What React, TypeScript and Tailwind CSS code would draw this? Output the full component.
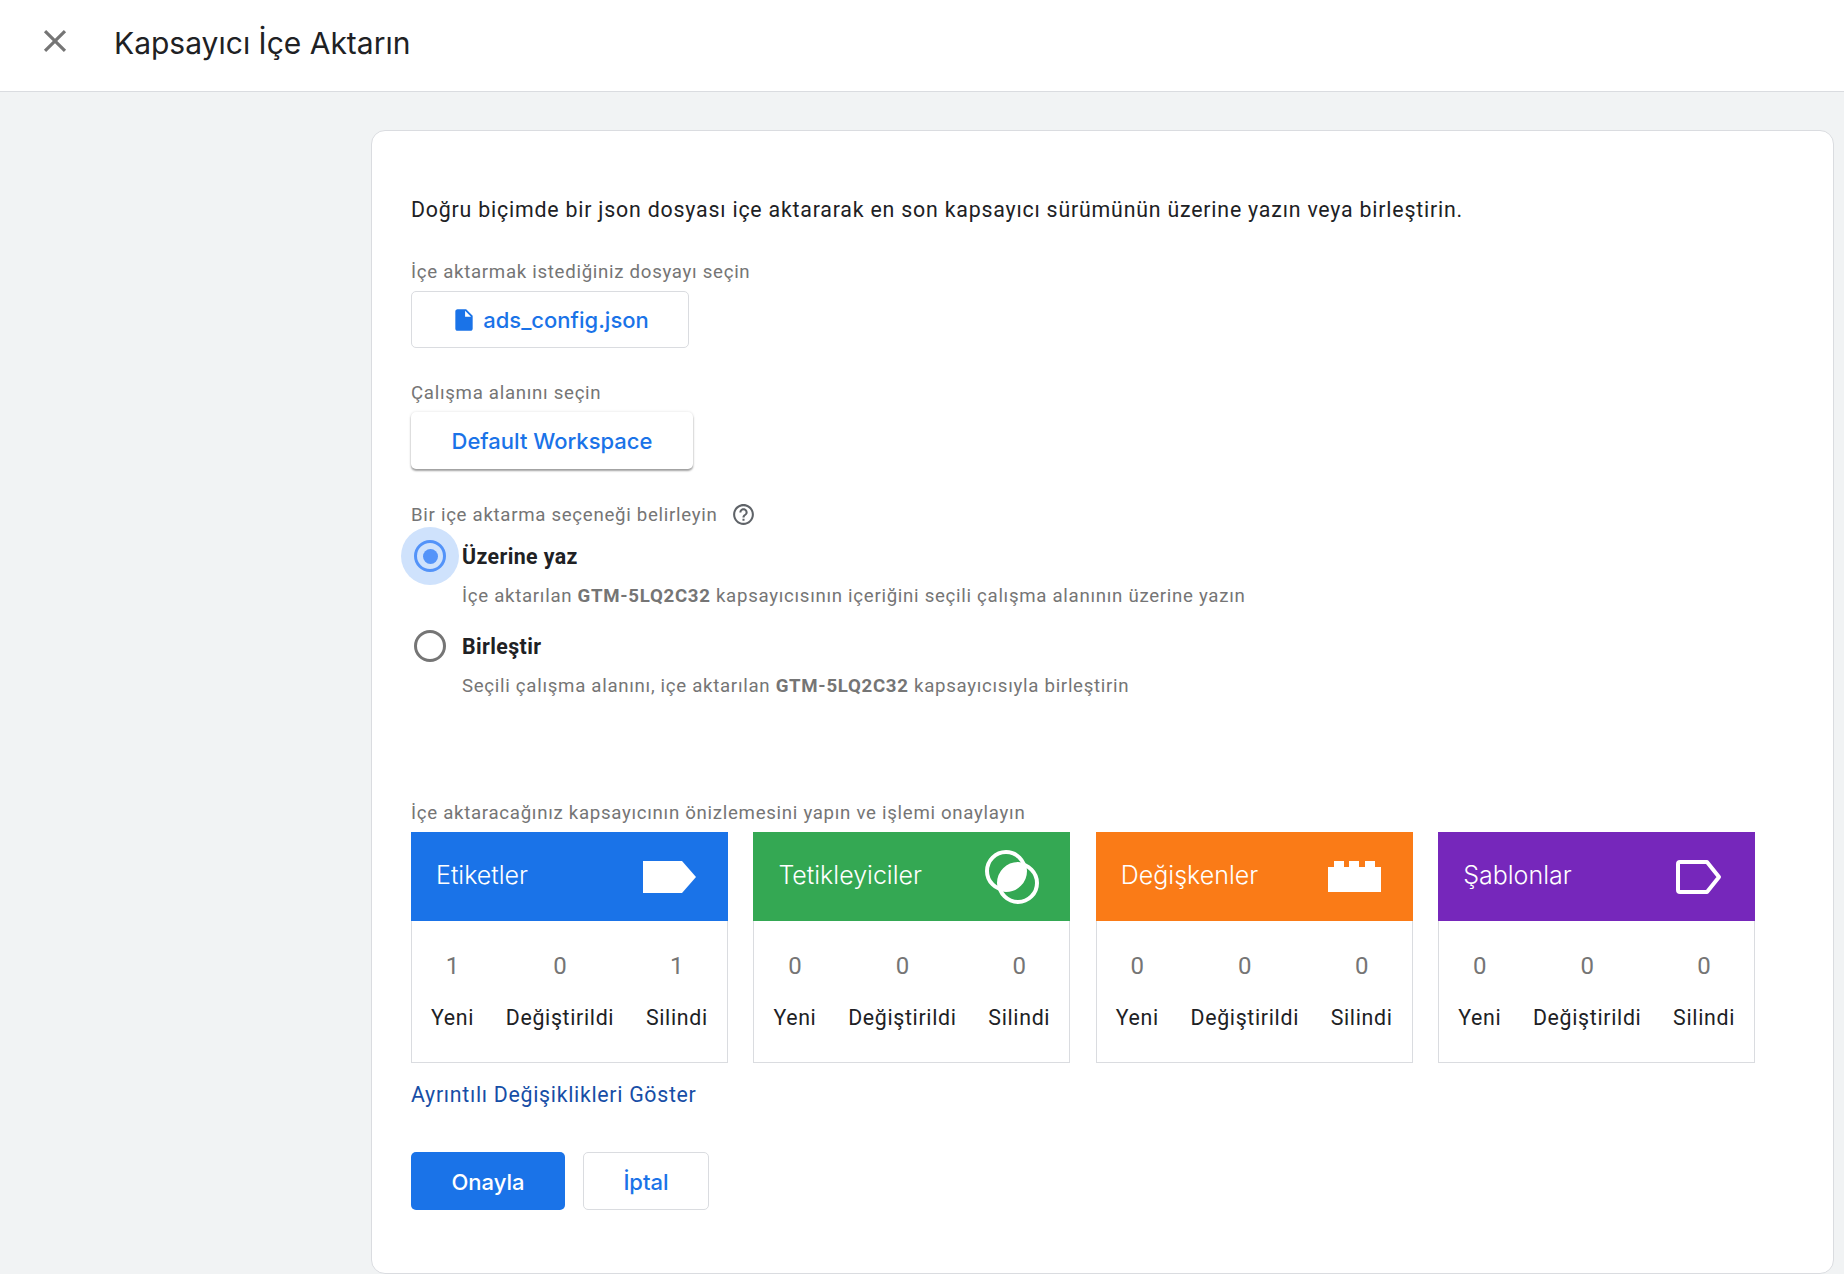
const sans = "font-['Roboto',sans-serif]";
const google = "font-['Inter',sans-serif]";

function TagIcon() {
  return (
    <svg width="54" height="34" viewBox="0 0 54 34">
      <path d="M0 1h39l14 16-14 16H0z" fill="#fff" />
    </svg>
  );
}

function TriggerIcon() {
  return (
    <svg width="54" height="54" viewBox="0 0 54 54">
      <defs>
        <clipPath id="trigger-clip">
          <circle cx="21" cy="21" r="19" />
        </clipPath>
      </defs>
      <circle cx="33" cy="33" r="19" fill="#fff" clipPath="url(#trigger-clip)" />
      <circle cx="21" cy="21" r="19" fill="none" stroke="#fff" strokeWidth="4" />
      <circle cx="33" cy="33" r="19" fill="none" stroke="#fff" strokeWidth="4" />
    </svg>
  );
}

function BlockIcon() {
  return (
    <svg width="54" height="34" viewBox="0 0 54 34">
      <path d="M0 7h6V1h10v6h5V1h10v6h6V1h10v6h6v25H0z" fill="#fff" />
    </svg>
  );
}

function TemplateIcon() {
  return (
    <svg className="mr-[2px]" width="46" height="34" viewBox="0 0 46 34">
      <path d="M4 2h27l12 15-12 15H4a2 2 0 0 1-2-2V4a2 2 0 0 1 2-2z" fill="none" stroke="#fff" strokeWidth="4" strokeLinejoin="round" />
    </svg>
  );
}

type Card = {
  title: string;
  color: string;
  icon: React.ReactNode;
  counts: number[];
};

const cards: Card[] = [
  { title: "Etiketler", color: "bg-[#1a73e8]", icon: <TagIcon />, counts: [1, 0, 1] },
  { title: "Tetikleyiciler", color: "bg-[#34a853]", icon: <TriggerIcon />, counts: [0, 0, 0] },
  { title: "Değişkenler", color: "bg-[#fa7b17]", icon: <BlockIcon />, counts: [0, 0, 0] },
  { title: "Şablonlar", color: "bg-[#7627bb]", icon: <TemplateIcon />, counts: [0, 0, 0] },
];

const statLabels = ["Yeni", "Değiştirildi", "Silindi"];

function SummaryCard({ card }: { card: Card }) {
  return (
    <div className="flex flex-col">
      <div className={`${card.color} h-[89px] flex items-center justify-between pl-[25px] pr-[31px] text-white`}>
        <span className={`${google} text-[25px] font-light pb-[2px]`}>{card.title}</span>
        {card.icon}
      </div>
      <div className="h-[142px] border border-t-0 border-[#dadce0] flex justify-between px-[19px] pt-[31px]">
        {statLabels.map((label, i) => (
          <div key={label} className="flex flex-col items-center">
            <span className="text-[24px] leading-[28px] text-[#757575]">{card.counts[i]}</span>
            <span className="mt-[24px] text-[21.33px] leading-[28px] tracking-[0.67px] text-[#202124]">{label}</span>
          </div>
        ))}
      </div>
    </div>
  );
}

function Label({ children }: { children: React.ReactNode }) {
  return <div className="text-[18.67px] leading-[24px] tracking-[0.7px] text-[#757575]">{children}</div>;
}

export default function App() {
  return (
    <div className={`${sans} min-h-[1274px] bg-[#f1f3f4] text-[#202124]`}>
      <header className="h-[92px] bg-white border-b border-[#dadce0] flex items-center pb-[9px]">
        <svg className="ml-[36px]" width="38" height="38" viewBox="0 0 24 24" fill="#757575">
          <path d="M19 6.41 17.59 5 12 10.59 6.41 5 5 6.41 10.59 12 5 17.59 6.41 19 12 13.41 17.59 19 19 17.59 13.41 12z" />
        </svg>
        <h1 className={`${google} ml-[40px] mt-[5px] text-[30px] font-normal`}>Kapsayıcı İçe Aktarın</h1>
      </header>
      <main className="pl-[371px] pr-[10px] pt-[38px]">
        <div className="h-[1144px] bg-white border border-[#dadce0] rounded-[14px] pl-[39px] pt-[67px]">
          <p className="text-[21.33px] leading-[24px] tracking-[0.8px]">
            Doğru biçimde bir json dosyası içe aktararak en son kapsayıcı sürümünün üzerine yazın veya birleştirin.
          </p>
          <div className="mt-[38px]">
            <Label>İçe aktarmak istediğiniz dosyayı seçin</Label>
          </div>
          <button className={`${google} mt-[7px] w-[278px] h-[57px] pt-[1px] border border-[#dadce0] rounded-[5px] flex items-center justify-center gap-[6px] text-[22px] font-medium text-[#1a73e8]`}>
            <svg width="26" height="26" viewBox="0 0 24 24" fill="#1a73e8">
              <path d="M6 2c-1.1 0-2 .9-2 2v16c0 1.1.9 2 2 2h12c1.1 0 2-.9 2-2V8l-6-6H6zm7 7V3.5L18.5 9H13z" />
            </svg>
            ads_config.json
          </button>
          <div className="mt-[33px]">
            <Label>Çalışma alanını seçin</Label>
          </div>
          <button className={`${google} mt-[7px] w-[282px] h-[57px] pt-[2px] rounded-[5px] bg-white shadow-[0_2px_2px_rgba(0,0,0,0.35),0_0_3px_rgba(0,0,0,0.12)] text-[22px] font-medium text-[#1a73e8]`}>
            Default Workspace
          </button>
          <div className="mt-[33px] flex items-center gap-[13px]">
            <Label>Bir içe aktarma seçeneği belirleyin</Label>
            <svg width="25" height="25" viewBox="0 0 24 24" fill="#5f6368">
              <path d="M11 18h2v-2h-2v2zm1-16C6.48 2 2 6.48 2 12s4.48 10 10 10 10-4.48 10-10S17.52 2 12 2zm0 18c-4.41 0-8-3.59-8-8s3.59-8 8-8 8 3.59 8 8-3.59 8-8 8zm0-14c-2.21 0-4 1.79-4 4h2c0-1.1.9-2 2-2s2 .9 2 2c0 2-3 1.75-3 5h2c0-2.25 3-2.5 3-5 0-2.21-1.79-4-4-4z" />
            </svg>
          </div>
          <div className="mt-[18px] pl-[51px] relative">
            <div className="absolute left-[-10px] top-[-18px] w-[58px] h-[58px] rounded-full bg-[#cfe2fc] flex items-center justify-center">
              <div className="w-[32px] h-[32px] rounded-full border-[3.5px] border-[#5393f9] flex items-center justify-center">
                <div className="w-[15px] h-[15px] rounded-full bg-[#5393f9]" />
              </div>
            </div>
            <div className="text-[21.33px] leading-[24px] font-bold tracking-[0.4px]">Üzerine yaz</div>
            <div className="mt-[15px]">
              <Label>
                İçe aktarılan <b className="font-bold">GTM-5LQ2C32</b> kapsayıcısının içeriğini seçili çalışma alanının üzerine yazın
              </Label>
            </div>
          </div>
          <div className="mt-[27px] pl-[51px] relative">
            <div className="absolute left-[3px] top-[-5px] w-[32px] h-[32px] rounded-full border-[3.5px] border-[#757575]" />
            <div className="text-[21.33px] leading-[24px] font-bold tracking-[0.4px]">Birleştir</div>
            <div className="mt-[15px]">
              <Label>
                Seçili çalışma alanını, içe aktarılan <b className="font-bold">GTM-5LQ2C32</b> kapsayıcısıyla birleştirin
              </Label>
            </div>
          </div>
          <div className="mt-[103px]">
            <Label>İçe aktaracağınız kapsayıcının önizlemesini yapın ve işlemi onaylayın</Label>
          </div>
          <div className="mt-[7px] w-[1344px] grid grid-cols-4 gap-[25.6px]">
            {cards.map((card) => (
              <SummaryCard key={card.title} card={card} />
            ))}
          </div>
          <a className="block mt-[20px] text-[21.33px] leading-[24px] tracking-[0.7px] text-[#174ea6]">Ayrıntılı Değişiklikleri Göster</a>
          <div className="mt-[45px] flex gap-[18px]">
            <button className={`${google} w-[154px] h-[58px] rounded-[5px] bg-[#1a73e8] text-white text-[22px] font-medium pt-[2px]`}>Onayla</button>
            <button className={`${google} w-[126px] h-[58px] rounded-[5px] border border-[#dadce0] text-[#1a73e8] text-[22px] font-medium pt-[2px]`}>İptal</button>
          </div>
        </div>
      </main>
    </div>
  );
}
